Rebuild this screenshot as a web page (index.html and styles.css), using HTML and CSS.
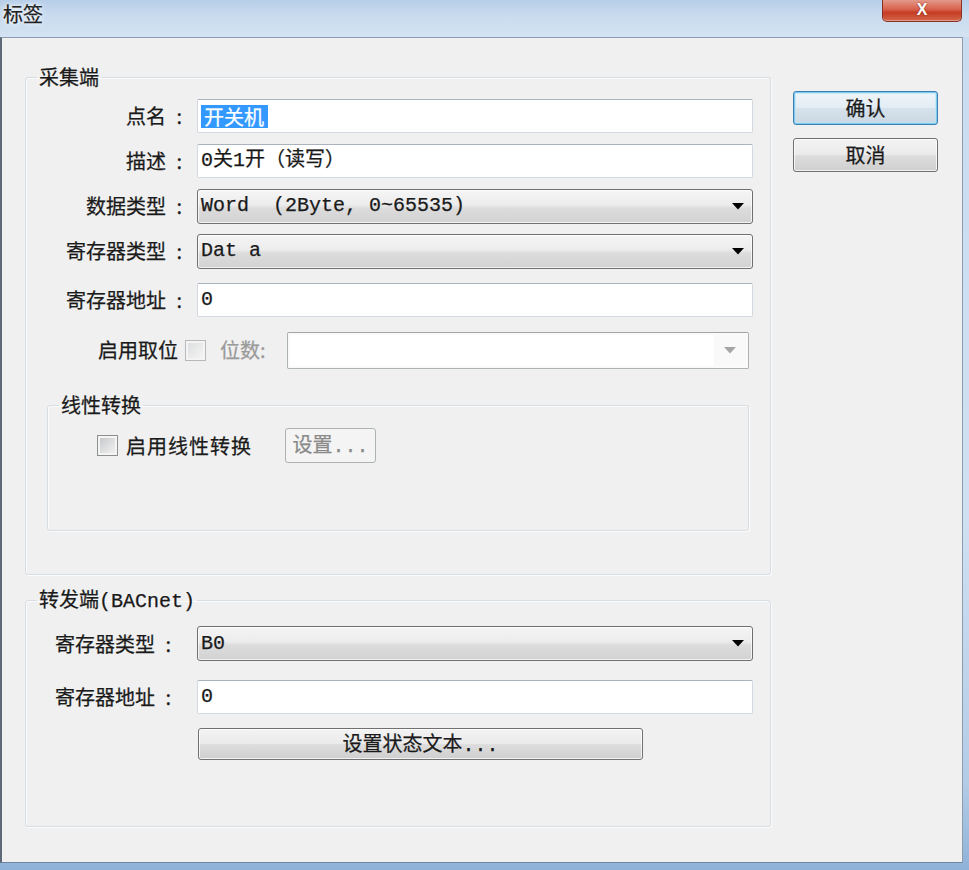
FILE: index.html
```html
<!DOCTYPE html>
<html lang="zh-CN">
<head>
<meta charset="utf-8">
<title>标签</title>
<link rel="stylesheet" href="styles.css">
</head>
<body>
<div class="window">
  <header class="titlebar">
    <span class="title">标签</span>
    <div class="close-btn"><span class="close-x">X</span></div>
  </header>
  <div class="client">
    <div class="main">
      <fieldset class="group group-collect">
        <legend class="group-title">采集端</legend>
        <div class="rows">
          <div class="row">
            <span class="lbl">点名<span class="colon">:</span></span>
            <div class="edit"><span class="selected">开关机</span></div>
          </div>
          <div class="row">
            <span class="lbl">描述<span class="colon">:</span></span>
            <div class="edit">0关1开（读写）</div>
          </div>
          <div class="row">
            <span class="lbl">数据类型<span class="colon">:</span></span>
            <div class="combo"><span class="combo-text">Word  (2Byte, 0~65535)</span><svg class="arrow" width="12" height="7" viewBox="0 0 12 7"><polygon points="0,0 12,0 6,6.5" fill="#000"/></svg></div>
          </div>
          <div class="row">
            <span class="lbl">寄存器类型<span class="colon">:</span></span>
            <div class="combo"><span class="combo-text">Dat a</span><svg class="arrow" width="12" height="7" viewBox="0 0 12 7"><polygon points="0,0 12,0 6,6.5" fill="#000"/></svg></div>
          </div>
          <div class="row row-loose">
            <span class="lbl">寄存器地址<span class="colon">:</span></span>
            <div class="edit">0</div>
          </div>
          <div class="row row-loose row-bit">
            <span class="lbl lbl-bit">启用取位</span>
            <span class="check check-disabled"></span>
            <span class="lbl-disabled">位数:</span>
            <div class="combo-disabled"><span class="combo-disabled-field"></span><span class="combo-disabled-btn"><svg width="12" height="7" viewBox="0 0 12 7"><polygon points="0,0 12,0 6,6.5" fill="#a6a6a6"/></svg></span></div>
          </div>
        </div>
        <fieldset class="group group-linear">
          <legend class="group-title">线性转换</legend>
          <div class="linear-row">
            <span class="check"></span>
            <span class="check-label">启用线性转换</span>
            <button class="btn btn-disabled btn-small" type="button">设置<span class="mono">...</span></button>
          </div>
        </fieldset>
      </fieldset>

      <fieldset class="group group-forward">
        <legend class="group-title">转发端<span class="mono">(BACnet)</span></legend>
        <div class="grid-forward">
          <span class="lbl2">寄存器类型<span class="colon">:</span></span>
          <div class="combo"><span class="combo-text">B0</span><svg class="arrow" width="12" height="7" viewBox="0 0 12 7"><polygon points="0,0 12,0 6,6.5" fill="#000"/></svg></div>
          <span class="lbl2 gap-a">寄存器地址<span class="colon">:</span></span>
          <div class="edit gap-a">0</div>
          <span class="spacer gap-b"></span>
          <button class="btn btn-wide gap-b" type="button">设置状态文本<span class="mono">...</span></button>
        </div>
      </fieldset>
    </div>
    <div class="side">
      <button class="btn btn-default" type="button">确认</button>
      <button class="btn" type="button">取消</button>
    </div>
  </div>
</div>
</body>
</html>
```
FILE: styles.css
```css
* { box-sizing: border-box; }

html, body {
  margin: 0;
  padding: 0;
}

body {
  width: 969px;
  height: 870px;
  overflow: hidden;
  font-family: "Noto Sans CJK SC", sans-serif;
  font-size: 20px;
  color: #1a1a1a;
  -webkit-text-stroke: 0.25px currentColor;
}

.window {
  width: 969px;
  height: 870px;
  display: flex;
  flex-direction: column;
  background: linear-gradient(180deg, #c9dcf0 0%, #cfe0f2 60%, #b3cce6 90%, #8fb2d8 100%);
}

.titlebar {
  height: 37px;
  flex: none;
  display: flex;
  align-items: flex-start;
  background: linear-gradient(180deg, #b7cee8 0%, #c8dbef 40%, #d4e3f3 100%);
}

.title {
  padding: 2px 0 0 3px;
  font-size: 20px;
  line-height: 24px;
  color: #222;
  text-shadow: 0 0 6px #fff, 0 0 3px #fff;
}

.close-btn {
  margin-left: auto;
  margin-right: 7px;
  width: 80px;
  height: 22px;
  border: 1px solid #8a3125;
  border-top: none;
  border-radius: 0 0 5px 5px;
  background: linear-gradient(180deg, #e59a8a 0%, #d7604b 45%, #c53d25 60%, #d3664a 100%);
  box-shadow: inset 0 -1px 0 rgba(255, 255, 255, 0.35);
  display: flex;
  justify-content: center;
}

.close-x {
  font-family: "Liberation Sans", sans-serif;
  font-weight: bold;
  font-size: 16px;
  line-height: 17px;
  margin-top: 1px;
  color: #fff;
  -webkit-text-stroke: 0;
  text-shadow: 0 0 2px #7a2a1a;
}

.client {
  flex: 1;
  margin: 0 6px 7px 0;
  background: #f0f0f0;
  border-top: 1px solid #8d9db0;
  border-left: 2px solid #5e6a78;
  border-right: 1px solid #8d9db0;
  border-bottom: 1px solid #6f86a0;
  display: flex;
  align-items: flex-start;
  gap: 22px;
  padding: 27px 0 0 23px;
}

.main {
  width: 746px;
  display: flex;
  flex-direction: column;
}

.side {
  width: 145px;
  margin-top: 26px;
  display: flex;
  flex-direction: column;
  gap: 13px;
}

/* group boxes */
.group {
  margin: 0;
  padding-left: 0;
  min-width: 0;
  border: 1px solid #d6dde3;
  border-radius: 3px;
  box-shadow: inset 1px 1px 0 #fbfbfb, 1px 1px 0 #fbfbfb;
}

.group-title {
  margin-left: 11px;
  padding: 0 2px;
  font-size: 20px;
  line-height: 24px;
  color: #1a1a1a;
}

.mono {
  font-family: "Liberation Mono", "Noto Sans CJK SC", monospace;
}

.colon {
  display: inline-block;
  width: 18px;
  padding-right: 2px;
  text-align: right;
}

.group-collect {
  padding: 10px 0 43px 0;
}

.rows {
  display: flex;
  flex-direction: column;
  gap: 11px;
  padding-right: 17px;
}

.row {
  display: flex;
  align-items: center;
  height: 34px;
}

.row-loose {
  margin-top: 4px;
}

.row-bit {
  height: 36px;
}

.lbl {
  width: 158px;
  margin-right: 13px;
  text-align: right;
  line-height: 24px;
  white-space: nowrap;
}

.lbl-bit {
  width: 152px;
  margin-right: 7px;
}

.edit {
  flex: 1;
  height: 34px;
  display: flex;
  align-items: center;
  padding-left: 3px;
  background: #fff;
  border: 1px solid #d3d9e0;
  border-top-color: #aab3bd;
  border-radius: 2px;
  font-family: "Liberation Mono", "Noto Sans CJK SC", monospace;
  font-size: 20px;
  line-height: 24px;
  white-space: pre;
}

.selected {
  background: #3399ff;
  color: #fff;
  padding: 0 4px 0 3px;
  font-family: "Noto Sans CJK SC", sans-serif;
  line-height: 23px;
}

.combo {
  flex: 1;
  height: 35px;
  display: flex;
  align-items: center;
  padding-left: 3px;
  border: 1px solid #707070;
  border-radius: 3px;
  background: linear-gradient(180deg, #f5f5f5 0%, #ececec 45%, #dcdcdc 55%, #d2d2d2 100%);
  box-shadow: inset 0 0 0 1px rgba(255, 255, 255, 0.7);
}

.combo-text {
  font-family: "Liberation Mono", "Noto Sans CJK SC", monospace;
  font-size: 20px;
  line-height: 24px;
  white-space: pre;
}

.arrow {
  margin-left: auto;
  margin-right: 8px;
  flex: none;
}

/* checkbox */
.check {
  width: 21px;
  height: 21px;
  flex: none;
  border: 1px solid #8e8f8f;
  background: linear-gradient(135deg, #bfc3c7 0%, #e2e2e2 60%, #f4f4f4 100%);
  box-shadow: inset 0 0 0 2px #f4f4f4;
}

.check-disabled {
  border-color: #b6b8ba;
  background: linear-gradient(135deg, #dadcde 0%, #ececec 60%, #f6f6f6 100%);
}

.lbl-disabled {
  width: 53px;
  margin-left: 14px;
  margin-right: 14px;
  color: #9a9a9a;
  line-height: 24px;
  white-space: nowrap;
}

.combo-disabled {
  flex: 1;
  margin-right: 4px;
  height: 37px;
  display: flex;
  padding: 2px;
  border: 1px solid #adb2b5;
  border-top-color: #a4a4a4;
  border-radius: 2px;
  background: #fafafa;
}

.combo-disabled-field {
  flex: 1;
  background: #fff;
}

.combo-disabled-btn {
  width: 32px;
  display: flex;
  align-items: center;
  justify-content: center;
  background: #f9f9f9;
}

/* linear group */
.group-linear {
  margin: 25px 21px 0 21px;
  padding: 11px 0 67px 0;
}

.linear-row {
  display: flex;
  align-items: center;
  height: 35px;
  padding-left: 49px;
}

.check-label {
  margin-left: 8px;
  line-height: 24px;
  letter-spacing: 1px;
}

/* buttons */
.btn {
  height: 34px;
  padding: 0;
  border: 1px solid #707070;
  border-radius: 3px;
  background: linear-gradient(180deg, #f3f3f3 0%, #ebebeb 48%, #dddddd 52%, #cfcfcf 100%);
  box-shadow: inset 0 0 0 1px rgba(255, 255, 255, 0.75);
  font-family: "Noto Sans CJK SC", sans-serif;
  font-size: 20px;
  line-height: 24px;
  color: #1a1a1a;
  -webkit-text-stroke: 0.25px currentColor;
}

.btn-default {
  border-color: #3c7fb1;
  background: linear-gradient(180deg, #eef5fa 0%, #e3edf4 48%, #d6e2eb 52%, #cad8e3 100%);
  box-shadow: inset 0 0 0 1px #7fcbef, inset 0 0 0 2px rgba(180, 228, 248, 0.6);
}

.btn-small {
  margin-left: 33px;
  width: 91px;
  height: 35px;
}

.btn-disabled {
  border-color: #adb2b5;
  background: #f4f4f4;
  box-shadow: none;
  color: #8a8a8a;
}

/* forward group */
.group-forward {
  margin-top: 12px;
  padding: 12px 17px 66px 0;
}

.grid-forward {
  display: grid;
  grid-template-columns: 120px 1fr;
  column-gap: 22px;
  align-items: center;
  padding-left: 29px;
}

.grid-forward .combo {
  height: 35px;
}

.gap-a {
  margin-top: 19px;
}

.gap-b {
  margin-top: 14px;
}

.lbl2 {
  line-height: 24px;
  white-space: nowrap;
}

.btn-wide {
  width: 445px;
  height: 32px;
  margin-left: 1px;
}
```
